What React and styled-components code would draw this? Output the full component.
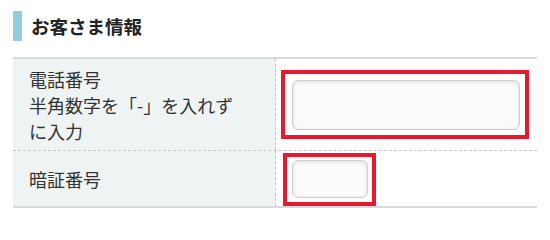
import React from "react";
import styled, { createGlobalStyle } from "styled-components";

const Global = createGlobalStyle`
  html, body { margin: 0; padding: 0; background: #ffffff; }
  body { font-family: "Noto Sans CJK JP", "Noto Sans", sans-serif; color: #333; }
`;

const Page = styled.div`
  width: 550px;
  height: 216px;
  overflow: hidden;
`;

const Heading = styled.h2`
  margin: 11px 0 0 13px;
  height: 30px;
  line-height: 30px;
  border-left: 9px solid #93cdda;
  padding-left: 9px;
  font-size: 18.5px;
  font-weight: 700;
  color: #222;
`;

const Table = styled.div`
  margin: 16px 0 0 13px;
  width: 524px;
  border-top: 2px solid #d9d9d9;
  border-bottom: 2px solid #d9d9d9;
`;

const Row = styled.div`
  display: grid;
  grid-template-columns: 263px 1fr;
  & + & {
    border-top: 1px dashed #c4c4c4;
  }
`;

const Label = styled.div`
  background: #eef4f4;
  border-right: 1px dashed #c4c4c4;
  padding: ${(p) => p.$pad || "7px 10px 6px 16px"};
  font-size: 18px;
  line-height: 26px;
  color: #333;
  display: flex;
  align-items: center;
`;

const Cell = styled.div`
  display: flex;
  align-items: flex-start;
`;

const RedFrame = styled.div`
  box-sizing: border-box;
  border: 4px solid #e8192c;
  margin: ${(p) => p.$margin};
  width: ${(p) => p.$w}px;
  height: ${(p) => p.$h}px;
  padding: ${(p) => p.$pad};
`;

const Input = styled.input`
  box-sizing: border-box;
  display: block;
  width: ${(p) => p.$w}px;
  height: ${(p) => p.$h}px;
  border: 1px solid #cccccc;
  border-radius: 6px;
  background: #fbfbfb;
  box-shadow: inset 0 1px 4px rgba(0, 0, 0, 0.12);
  outline: none;
  padding: 0 8px;
  font-size: 16px;
  font-family: inherit;
`;

export default function App() {
  return (
    <Page>
      <Global />
      <Heading>お客さま情報</Heading>
      <Table>
        <Row>
          <Label>
            <span>
              電話番号
              <br />
              半角数字を「-」を入れず
              <br />
              に入力
            </span>
          </Label>
          <Cell>
            <RedFrame $margin="11px 0 11px 5px" $w={248} $h={69} $pad="6px 0 0 7px">
              <Input type="tel" $w={228} $h={50} />
            </RedFrame>
          </Cell>
        </Row>
        <Row>
          <Label $pad="0 10px 0 16px">暗証番号</Label>
          <Cell>
            <RedFrame $margin="2px 0 0 7px" $w={93} $h={53} $pad="3px 0 0 5px">
              <Input type="password" $w={76} $h={38} />
            </RedFrame>
          </Cell>
        </Row>
      </Table>
    </Page>
  );
}
